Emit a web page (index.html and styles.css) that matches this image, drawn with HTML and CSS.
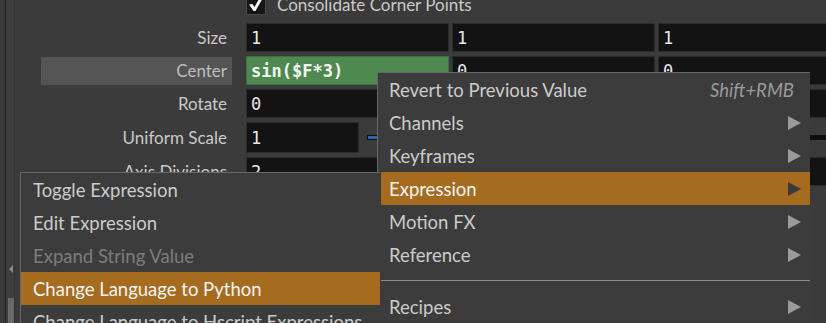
FILE: index.html
```html
<!DOCTYPE html>
<html>
<head>
<meta charset="utf-8">
<link rel="stylesheet" href="styles.css">
</head>
<body>
<div class="app">
  <div class="sidebar">
    <div class="side-gap"></div>
    <div class="side-strip">
      <div class="side-arrow"></div>
      <div class="side-grip"></div>
    </div>
    <div class="side-line"></div>
  </div>
  <div class="panel">
    <div class="row row-check">
      <div class="label"></div>
      <div class="check-wrap">
        <span class="checkbox"><svg width="16" height="16" viewBox="0 0 16 16"><path d="M1 8.5 L4.5 8 L6.5 11 L12 1 L15.5 1 L7.5 15 L5.5 15 Z" fill="#f2f2f2"/></svg></span>
        <span class="check-label">Consolidate Corner Points</span>
      </div>
    </div>
    <div class="row row-size">
      <div class="label">Size</div>
      <div class="fields">
        <div class="field">1</div>
        <div class="field">1</div>
        <div class="field">1</div>
      </div>
    </div>
    <div class="row row-center">
      <div class="label label-hl">Center</div>
      <div class="fields">
        <div class="field field-expr">sin($F*3)</div>
        <div class="field">0</div>
        <div class="field">0</div>
      </div>
    </div>
    <div class="row row-rotate">
      <div class="label">Rotate</div>
      <div class="fields">
        <div class="field">0</div>
        <div class="field">0</div>
        <div class="field">0</div>
      </div>
    </div>
    <div class="row row-scale">
      <div class="label">Uniform Scale</div>
      <div class="fields">
        <div class="field field-short">1</div>
        <div class="slider"><div class="slider-fill"></div></div>
      </div>
    </div>
    <div class="row row-axis">
      <div class="label">Axis Divisions</div>
      <div class="fields">
        <div class="field field-wide">2</div>
      </div>
    </div>
  </div>
</div>

<div class="menu menu-main">
  <div class="item"><span>Revert to Previous Value</span><span class="shortcut">Shift+RMB</span></div>
  <div class="item"><span>Channels</span><span class="arrow"></span></div>
  <div class="item"><span>Keyframes</span><span class="arrow"></span></div>
  <div class="item item-hl"><span>Expression</span><span class="arrow"></span></div>
  <div class="item"><span>Motion FX</span><span class="arrow"></span></div>
  <div class="item"><span>Reference</span><span class="arrow"></span></div>
  <div class="sep"></div>
  <div class="item"><span>Recipes</span><span class="arrow"></span></div>
</div>

<div class="menu menu-sub">
  <div class="item"><span>Toggle Expression</span></div>
  <div class="item"><span>Edit Expression</span></div>
  <div class="item item-disabled"><span>Expand String Value</span></div>
  <div class="item item-hl"><span>Change Language to Python</span></div>
  <div class="item"><span>Change Language to Hscript Expressions</span></div>
</div>
</body>
</html>
```

FILE: styles.css
```css
html, body {
  margin: 0;
  padding: 0;
}
body {
  width: 826px;
  height: 323px;
  overflow: hidden;
  position: relative;
  background: #3b3b3b;
  font-family: Lato, "Open Sans", sans-serif;
  color: #c9c9c9;
}
.app {
  display: flex;
  height: 323px;
}
.sidebar {
  display: flex;
  width: 15px;
  flex: none;
}
.side-gap {
  width: 5px;
  background: #3a3a3a;
  border-right: 1px solid #222;
}
.side-strip {
  width: 8px;
  background: #3e3e3e;
  position: relative;
}
.side-arrow {
  position: absolute;
  left: 3px;
  top: 265px;
  width: 0;
  height: 0;
  border-top: 4px solid transparent;
  border-bottom: 4px solid transparent;
  border-right: 4px solid #8a8a8a;
}
.side-grip {
  position: absolute;
  left: 2px;
  top: 298px;
  width: 6px;
  height: 26px;
  background-image: radial-gradient(circle, #6a6a6a 0.8px, transparent 1px);
  background-size: 2px 2px;
}
.side-line {
  width: 1px;
  background: #343434;
}
.panel {
  flex: 1;
  display: flex;
  flex-direction: column;
  overflow: hidden;
}
.row {
  display: flex;
  align-items: center;
  flex: none;
}
.label {
  width: 186px;
  margin-left: 26px;
  margin-right: 14px;
  padding-right: 5px;
  text-align: right;
  font-size: 17px;
  line-height: 28px;
  height: 28px;
  flex: none;
}
.label-hl {
  background: #545454;
  color: #bdbdbd;
}
.row-check {
  height: 20px;
  margin-top: -6px;
}
.row-check .label {
  height: 20px;
}
.check-wrap {
  display: flex;
  align-items: center;
  gap: 11px;
}
.checkbox {
  width: 18px;
  height: 19px;
  background: #161616;
  border: 1px solid #4a4a4a;
  display: flex;
  align-items: center;
  justify-content: center;
}
.check-label {
  font-size: 17px;
  color: #c9c9c9;
}
.fields {
  display: flex;
  gap: 3px;
  align-items: center;
  flex: none;
}
.field {
  width: 197px;
  height: 27px;
  background: #131313;
  border: 1px solid #2c2c2c;
  font-family: "DejaVu Sans Mono", monospace;
  font-size: 17px;
  line-height: 28px;
  padding-left: 4px;
  color: #e8e8e8;
  flex: none;
}
.field-expr {
  background: #4e8a4f;
  border-color: #3f6f40;
  color: #f4f4f4;
  font-weight: bold;
}
.field-short {
  width: 107px;
  height: 29px;
  line-height: 30px;
}
.field-wide {
  width: 600px;
}
.row-size { margin-top: 9px; }
.row-center { margin-top: 4px; }
.row-rotate { margin-top: 4px; }
.row-scale { margin-top: 4px; }
.row-scale .label { height: 31px; line-height: 31px; }
.row-axis { margin-top: 4px; }
.slider {
  width: 500px;
  height: 3px;
  margin-left: 5px;
  background: #0e0e0e;
  border: 1px solid #111;
}
.slider-fill {
  width: 40px;
  height: 3px;
  background: #2a66a8;
}
.menu {
  position: absolute;
  background: #3c3c3c;
  font-size: 18.5px;
}
.menu-main {
  left: 377px;
  top: 72px;
  width: 429px;
  height: 260px;
  border-top: 1px solid #686868;
  border-left: 1px solid #686868;
  padding-left: 3px;
}
.menu-sub {
  left: 20px;
  top: 172px;
  width: 359px;
  height: 160px;
  border-top: 1px solid #686868;
  border-left: 1px solid #686868;
}
.item {
  height: 33px;
  display: flex;
  align-items: center;
  justify-content: space-between;
  padding-left: 8px;
  padding-right: 9px;
  color: #cbcbcb;
  white-space: nowrap;
}
.menu-sub .item {
  padding-left: 12px;
}
.item-hl {
  background: #a56b1f;
  color: #f4f4f4;
}
.item-disabled {
  color: #7c7c7c;
}
.shortcut {
  font-style: italic;
  color: #9a9a9a;
  margin-right: 7px;
}
.arrow {
  width: 0;
  height: 0;
  border-top: 7px solid transparent;
  border-bottom: 7px solid transparent;
  border-left: 13px solid #9a9a9a;
}
.item-hl .arrow {
  border-left-color: #3a3a3a;
}
.sep {
  height: 19px;
  display: flex;
  align-items: center;
}
.sep::before {
  content: "";
  display: block;
  width: 100%;
  height: 1px;
  background: #8a8a8a;
}
```
